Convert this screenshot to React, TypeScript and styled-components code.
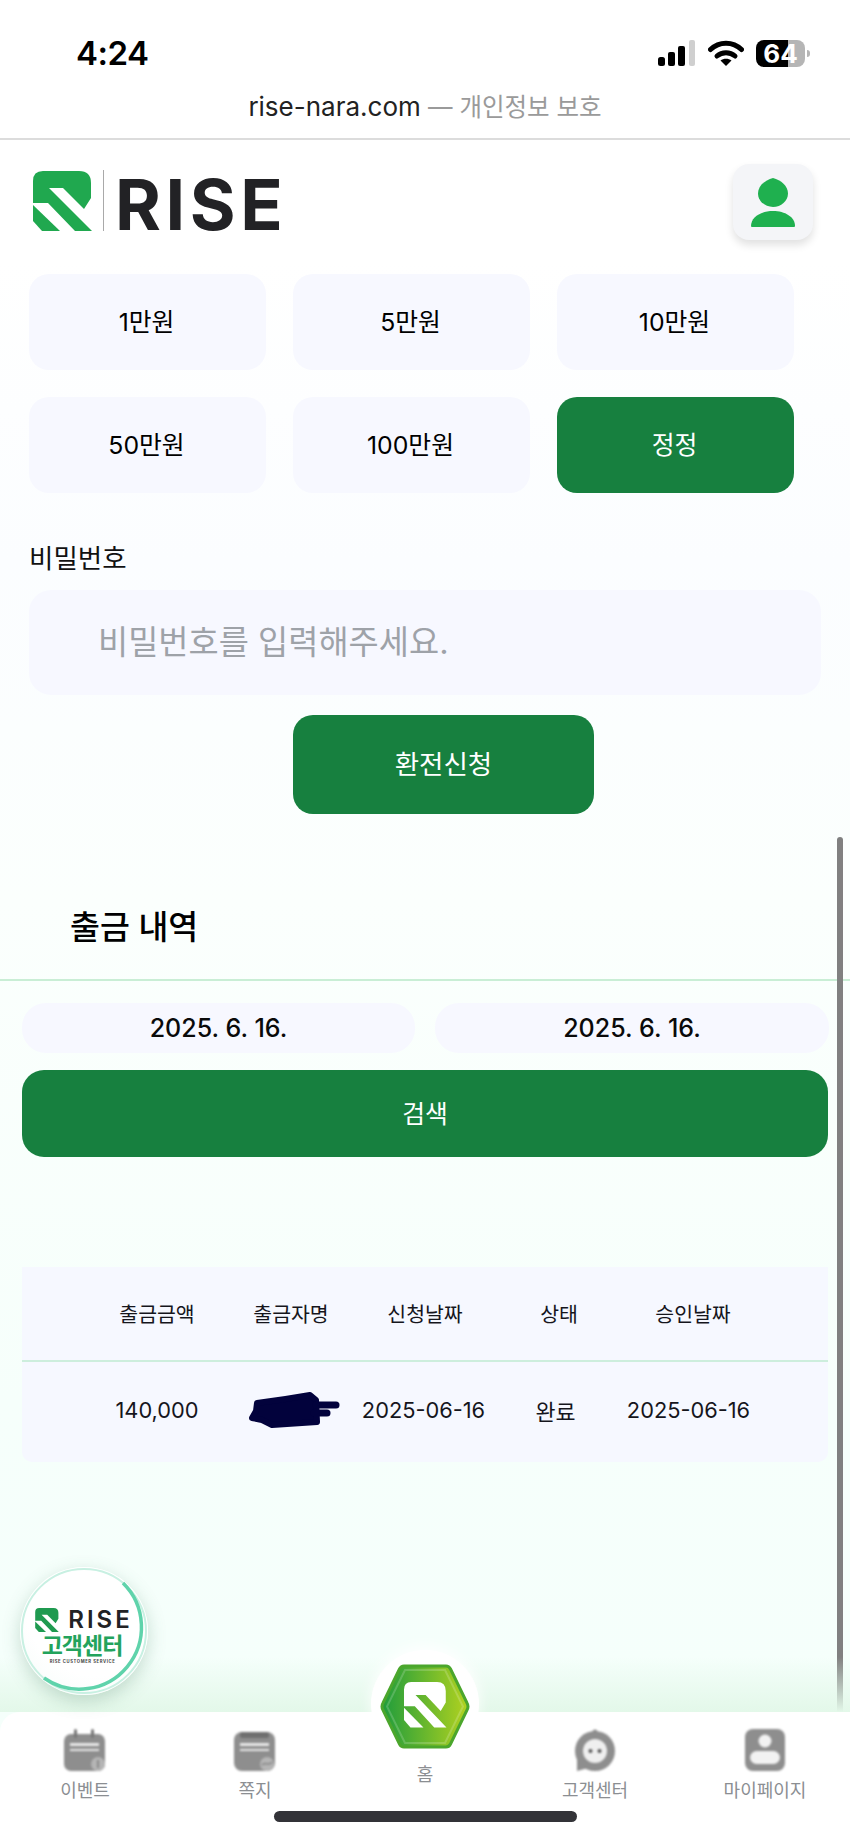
import React from "react";
import styled, { createGlobalStyle } from "styled-components";

const GlobalStyle = createGlobalStyle`
  html, body {
    margin: 0;
    padding: 0;
    background: #fff;
  }
  * {
    box-sizing: border-box;
  }
`;

const Page = styled.div`
  position: relative;
  width: 850px;
  height: 1839px;
  overflow: hidden;
  font-family: Inter, "Noto Sans CJK KR", sans-serif;
  color: #111;
  background: linear-gradient(180deg, #fff 0, #fff 260px, #fbfdff 560px, #fbfffd 900px, #f6fffb 1400px, #f5fffb 1700px);
`;

const StatusArea = styled.div`
  height: 140px;
  background: #fff;
  border-bottom: 2px solid #dcdcdc;
`;

const StatusRow = styled.div`
  display: flex;
  align-items: center;
  justify-content: space-between;
  height: 68px;
  padding: 38px 45px 0 76px;
`;

const Clock = styled.div`
  font-size: 33px;
  font-weight: 600;
  letter-spacing: -0.5px;
  color: #000;
`;

const StatusIcons = styled.div`
  display: flex;
  align-items: center;
  gap: 12px;
`;

const Battery = styled.div`
  position: relative;
  display: flex;
  align-items: center;
  justify-content: center;
  width: 49px;
  height: 27px;
  border-radius: 8px;
  background: linear-gradient(90deg, #000 66%, #b5b5b5 66%);
  color: #fff;
  font-size: 26px;
  font-weight: 700;
  &::after {
    content: "";
    position: absolute;
    left: 51px;
    top: 10px;
    width: 3px;
    height: 7px;
    border-radius: 0 3px 3px 0;
    background: #b5b5b5;
  }
`;

const UrlRow = styled.div`
  margin-top: 23px;
  text-align: center;
  font-size: 26px;
  line-height: 32px;
  color: #222;
`;

const UrlNote = styled.span`
  font-size: 24.5px;
  color: #9a9a9a;
`;

const Header = styled.header`
  display: flex;
  align-items: center;
  justify-content: space-between;
  height: 125px;
  padding: 0 37px 0 33px;
  background: #fff;
`;

const Logo = styled.div`
  display: flex;
  align-items: center;
  height: 60px;
  margin-top: -4px;
`;

const LogoRule = styled.div`
  width: 1px;
  height: 61px;
  margin: 0 11px 0 11px;
  background: #a9a9a9;
`;

const LogoWord = styled.div`
  margin-top: 8px;
  font-size: 70px;
  font-weight: 700;
  line-height: 60px;
  letter-spacing: 4.6px;
  color: #222225;
`;

const ProfileButton = styled.button`
  display: flex;
  align-items: center;
  justify-content: center;
  width: 80px;
  height: 76px;
  margin-top: -1px;
  padding: 0;
  border: 0;
  border-radius: 16px;
  background: #f4f5f8;
  box-shadow: 0 5px 8px rgba(0, 0, 0, 0.12);
`;

const Content = styled.main`
  padding: 9px 0 0;
`;

const AmountGrid = styled.div`
  display: grid;
  grid-template-columns: repeat(3, 237px);
  grid-auto-rows: 96px;
  gap: 27px;
  padding-left: 29px;
`;

const AmountButton = styled.button<{ $active?: boolean }>`
  padding: 0 2px 4px 0;
  border: 0;
  border-radius: 20px;
  font-family: inherit;
  font-size: 24.8px;
  font-weight: 400;
  background: ${(p) => (p.$active ? "#17803f" : "#f7f8ff")};
  color: ${(p) => (p.$active ? "#fff" : "#000")};
`;

const FieldLabel = styled.div`
  margin: 47px 0 14px 29px;
  font-size: 26.5px;
  line-height: 36px;
  color: #111;
`;

const PasswordInput = styled.input`
  display: block;
  width: 792px;
  height: 105px;
  margin-left: 29px;
  padding: 0 0 2px 69px;
  border: 0;
  border-radius: 22px;
  outline: none;
  background: #f7f8ff;
  font-family: inherit;
  font-size: 32.8px;
  &::placeholder {
    color: #9ea2a8;
    opacity: 1;
  }
`;

const SubmitButton = styled.button`
  display: block;
  width: 301px;
  height: 99px;
  margin: 20px 0 0 293px;
  padding: 0 0 4px;
  border: 0;
  border-radius: 20px;
  background: #17803f;
  color: #fff;
  font-family: inherit;
  font-size: 26.5px;
`;

const SectionTitle = styled.h2`
  margin: 0;
  padding: 91px 0 0 70px;
  height: 167px;
  border-bottom: 2px solid #c9eed5;
  font-size: 32.5px;
  font-weight: 500;
  line-height: 46px;
  color: #000;
`;

const DateRow = styled.div`
  display: grid;
  grid-template-columns: 393px 394px;
  gap: 20px;
  margin: 22px 0 0 22px;
`;

const DateBox = styled.div`
  display: flex;
  align-items: center;
  justify-content: center;
  height: 50px;
  border-radius: 24px;
  background: #f7f8ff;
  font-size: 25px;
  font-weight: 500;
  color: #0a0a0a;
`;

const SearchButton = styled.button`
  display: block;
  width: 806px;
  height: 87px;
  margin: 17px 0 0 22px;
  padding: 0 0 4px;
  border: 0;
  border-radius: 22px;
  background: #17803f;
  color: #fff;
  font-family: inherit;
  font-size: 24.8px;
`;

const HistoryTable = styled.div`
  width: 806px;
  margin: 110px 0 0 22px;
`;

const HeadRow = styled.div`
  display: grid;
  grid-template-columns: repeat(5, 134px);
  justify-content: center;
  align-items: center;
  height: 95px;
  padding-bottom: 2px;
  background: #f6f8ff;
  border-bottom: 2px solid #cdeedd;
  font-size: 20.5px;
  font-weight: 400;
  color: #15151c;
`;

const DataRow = styled.div`
  display: grid;
  grid-template-columns: 136px 133px 131px 133px 133px;
  align-items: center;
  height: 100px;
  padding: 0 0 4px 67px;
  background: #f6f8ff;
  border-radius: 0 0 10px 10px;
  font-size: 21.8px;
  font-weight: 400;
  color: #15151c;
`;

const Cell = styled.div`
  display: flex;
  justify-content: center;
  white-space: nowrap;
`;

const RedactionMark = styled.svg`
  margin-left: 5px;
`;

const Badge = styled.div`
  position: absolute;
  left: 20px;
  top: 1567px;
  display: flex;
  flex-direction: column;
  align-items: center;
  width: 128px;
  height: 128px;
  padding-top: 41px;
  border-radius: 50%;
  background: radial-gradient(circle at 60% 30%, #fff 60%, #f3fbf8 100%);
  box-shadow: 0 6px 18px rgba(60, 120, 90, 0.26);
`;

const BadgeRing = styled.svg`
  position: absolute;
  inset: 0;
`;

const BadgeLogo = styled.div`
  display: flex;
  align-items: center;
  gap: 9px;
  height: 24px;
`;

const BadgeWord = styled.div`
  font-size: 24px;
  font-weight: 600;
  line-height: 24px;
  letter-spacing: 3px;
  color: #222225;
`;

const BadgeTitle = styled.div`
  margin: 2px 4px 0 0;
  font-size: 23px;
  font-weight: 700;
  line-height: 25px;
  letter-spacing: -1px;
  color: #23a35c;
`;

const BadgeCaption = styled.div`
  margin-right: 3px;
  font-size: 4.2px;
  font-weight: 700;
  line-height: 6px;
  letter-spacing: 0.6px;
  color: #444;
`;

const BottomNav = styled.nav`
  position: absolute;
  left: 0;
  right: 0;
  bottom: 0;
  display: grid;
  grid-template-columns: repeat(5, 170px);
  height: 127px;
  border-radius: 20px 0 0 0;
  background: #fff;
  &::before {
    content: "";
    position: absolute;
    left: 0;
    right: 0;
    bottom: 100%;
    height: 55px;
    background: linear-gradient(180deg, rgba(226, 247, 232, 0), #e3f8e9);
  }
`;

const NavItem = styled.div<{ $home?: boolean }>`
  position: relative;
  display: flex;
  flex-direction: column;
  align-items: center;
  padding-top: ${(p) => (p.$home ? "45px" : "17px")};
`;

const NavIcon = styled.svg`
  display: block;
  width: 42px;
  height: 44px;
  filter: blur(1px);
`;

const NavLabel = styled.div`
  margin-top: 6px;
  font-size: 18px;
  font-weight: 400;
  line-height: 24px;
  color: #8b8e92;
`;

const HomeHalo = styled.div`
  position: absolute;
  left: 31px;
  top: -62px;
  width: 108px;
  height: 108px;
  border-radius: 50%;
  background: #fff;
  box-shadow: 0 -4px 14px rgba(255, 255, 255, 0.9);
`;

const HomeHex = styled.svg`
  position: absolute;
  left: 40px;
  top: -48px;
`;

const HomeIndicator = styled.div`
  position: absolute;
  left: 274px;
  top: 1811px;
  width: 303px;
  height: 11px;
  border-radius: 6px;
  background: #333338;
`;

const ScrollThumb = styled.div`
  position: absolute;
  left: 837px;
  top: 837px;
  width: 6px;
  height: 915px;
  border-radius: 3px;
  background: #808080;
`;

function RiseMark({ size, height, fill }: { size: number; height: number; fill: string }) {
  return (
    <svg width={size} height={height} viewBox="0 0 59 60">
      <path
        fill={fill}
        d="M0 10Q0 0 10 0H46Q58 0 58 12V27L51 38L30 17H16L59 60H42L15 32H0Z"
      />
      <path fill={fill} d="M0 34L27 60H9L0 50Z" />
    </svg>
  );
}

function SignalIcon() {
  return (
    <svg width="38" height="26" viewBox="0 0 38 26">
      <rect x="0" y="17" width="7" height="9" rx="2.5" fill="#000" />
      <rect x="10" y="12" width="7" height="14" rx="2" fill="#000" />
      <rect x="20" y="6" width="7" height="20" rx="2" fill="#000" />
      <rect x="31" y="0" width="6" height="26" rx="2" fill="#cfcfcf" />
    </svg>
  );
}

function WifiIcon() {
  return (
    <svg width="36" height="26" viewBox="0 0 36 26">
      <path d="M2.500 9.500C11 1 25 1 33.500 9.500" fill="none" stroke="#000" strokeWidth="5" strokeLinecap="round" />
      <path d="M9 16C14 11.500 22 11.500 27 16" fill="none" stroke="#000" strokeWidth="5" strokeLinecap="round" />
      <path d="M18 26L12.500 20.500C15.500 18 20.500 18 23.500 20.500Z" fill="#000" />
    </svg>
  );
}

function PersonIcon() {
  return (
    <svg width="44" height="49" viewBox="0 0 44 49">
      <path d="M22 0C30 2 37 8 37 15.500C37 23 30 29 22 29C14 29 7 23 7 15.500C7 8 14 2 22 0Z" fill="#1fb04f" />
      <path d="M0 48C0 39 10 33 22 33C34 33 44 39 44 48C44 49 43 49 42 49H2C1 49 0 49 0 48Z" fill="#1fb04f" />
    </svg>
  );
}

function Redaction() {
  return (
    <RedactionMark width="92" height="38" viewBox="0 0 92 38">
      <path
        fill="#02023c"
        stroke="#02023c"
        strokeWidth="6"
        strokeLinejoin="round"
        d="M9 12C25 10 45 7 62 4L68 9L69 31L24 34L14 29L4 27L8 20Z"
      />
      <path d="M68 14H88" stroke="#02023c" strokeWidth="7" strokeLinecap="round" />
      <path d="M66 22H79" stroke="#02023c" strokeWidth="7" strokeLinecap="round" />
    </RedactionMark>
  );
}

function BadgeArc() {
  return (
    <BadgeRing width="128" height="128" viewBox="0 0 128 128">
      <circle cx="64" cy="64" r="62" fill="none" stroke="#c8f0e2" strokeWidth="2" />
      <path d="M103 16A62 62 0 0 1 24 111" fill="none" stroke="#5fd3ab" strokeWidth="3.5" />
    </BadgeRing>
  );
}

function CalendarIcon() {
  return (
    <NavIcon viewBox="0 0 42 44">
      <rect x="0" y="5" width="41" height="37" rx="7" fill="#8e8e8e" />
      <rect x="10" y="0" width="3" height="9" rx="1.500" fill="#777" />
      <rect x="27" y="0" width="3" height="9" rx="1.500" fill="#777" />
      <rect x="6" y="14" width="29" height="3" fill="#e8e8e8" />
      <rect x="6" y="20" width="29" height="2" fill="#e8e8e8" />
      <circle cx="34" cy="35" r="7" fill="#b5b5b5" />
      <rect x="33" y="31" width="2" height="8" fill="#8a8a8a" />
    </NavIcon>
  );
}

function NoteIcon() {
  return (
    <NavIcon viewBox="0 0 42 44">
      <rect x="0" y="3" width="41" height="39" rx="8" fill="#8e8e8e" />
      <rect x="6" y="3" width="29" height="6" rx="2" fill="#6f6f6f" />
      <rect x="6" y="14" width="29" height="3" fill="#e8e8e8" />
      <rect x="6" y="20" width="29" height="2" fill="#e8e8e8" />
      <circle cx="33" cy="35" r="7" fill="#b5b5b5" />
      <path d="M28 36C31 32 35 38 38 33" stroke="#8a8a8a" strokeWidth="1.600" fill="none" />
    </NavIcon>
  );
}

function SupportIcon() {
  return (
    <NavIcon viewBox="0 0 42 44">
      <circle cx="21" cy="22" r="20" fill="#8e8e8e" />
      <circle cx="21" cy="3" r="2.500" fill="#8e8e8e" />
      <path d="M3 30L3 42L14 39Z" fill="#8e8e8e" />
      <circle cx="21" cy="22" r="12" fill="#efefef" />
      <circle cx="16.500" cy="22" r="2" fill="#555" />
      <circle cx="25.500" cy="22" r="2" fill="#555" />
    </NavIcon>
  );
}

function MyPageIcon() {
  return (
    <NavIcon viewBox="0 0 42 44">
      <rect x="1" y="0" width="40" height="42" rx="8" fill="#8e8e8e" />
      <circle cx="21" cy="12" r="6.500" fill="#f2f2f2" />
      <rect x="6" y="22" width="30" height="13" rx="6.500" fill="#f2f2f2" />
    </NavIcon>
  );
}

function HomeBadge() {
  return (
    <HomeHex width="90" height="85" viewBox="0 0 90 85">
      <defs>
        <linearGradient id="hexFill" x1="0" x2="1" y1="0" y2="0">
          <stop offset="0" stopColor="#1f9c3c" />
          <stop offset="1" stopColor="#b2d21f" />
        </linearGradient>
      </defs>
      <path
        d="M24 2H66Q69 2 70.500 5L87 39Q89 42.500 87 46L70.500 80Q69 83 66 83H24Q21 83 19.500 80L3 46Q1 42.500 3 39L19.500 5Q21 2 24 2Z"
        fill="url(#hexFill)"
        stroke="#4ba62c"
        strokeWidth="3"
      />
      <path
        d="M25 6H65L83 42.500L65 79H25L7 42.500Z"
        fill="none"
        stroke="#fff"
        strokeOpacity="0.18"
        strokeWidth="2"
      />
      <g transform="translate(24 18) scale(0.72 0.76)">
        <path fill="#fff" d="M0 10Q0 0 10 0H46Q58 0 58 12V27L51 38L30 17H16L59 60H42L15 32H0Z" />
        <path fill="#fff" d="M0 34L27 60H9L0 50Z" />
      </g>
    </HomeHex>
  );
}

export default function App() {
  return (
    <Page>
      <GlobalStyle />
      <StatusArea>
        <StatusRow>
          <Clock>4:24</Clock>
          <StatusIcons>
            <SignalIcon />
            <WifiIcon />
            <Battery>64</Battery>
          </StatusIcons>
        </StatusRow>
        <UrlRow>
          rise-nara.com <UrlNote>— 개인정보 보호</UrlNote>
        </UrlRow>
      </StatusArea>

      <Header>
        <Logo>
          <RiseMark size={59} height={60} fill="#20a84f" />
          <LogoRule />
          <LogoWord>RISE</LogoWord>
        </Logo>
        <ProfileButton aria-label="프로필">
          <PersonIcon />
        </ProfileButton>
      </Header>

      <Content>
        <AmountGrid>
          {["1만원", "5만원", "10만원", "50만원", "100만원"].map((label) => (
            <AmountButton key={label}>{label}</AmountButton>
          ))}
          <AmountButton $active>정정</AmountButton>
        </AmountGrid>

        <FieldLabel>비밀번호</FieldLabel>
        <PasswordInput readOnly placeholder="비밀번호를 입력해주세요." />
        <SubmitButton>환전신청</SubmitButton>

        <SectionTitle>출금 내역</SectionTitle>
        <DateRow>
          <DateBox>2025. 6. 16.</DateBox>
          <DateBox>2025. 6. 16.</DateBox>
        </DateRow>
        <SearchButton>검색</SearchButton>

        <HistoryTable>
          <HeadRow>
            <Cell>출금금액</Cell>
            <Cell>출금자명</Cell>
            <Cell>신청날짜</Cell>
            <Cell>상태</Cell>
            <Cell>승인날짜</Cell>
          </HeadRow>
          <DataRow>
            <Cell>140,000</Cell>
            <Cell>
              <Redaction />
            </Cell>
            <Cell>2025-06-16</Cell>
            <Cell>완료</Cell>
            <Cell>2025-06-16</Cell>
          </DataRow>
        </HistoryTable>
      </Content>

      <ScrollThumb />

      <BottomNav>
        <NavItem>
          <CalendarIcon />
          <NavLabel>이벤트</NavLabel>
        </NavItem>
        <NavItem>
          <NoteIcon />
          <NavLabel>쪽지</NavLabel>
        </NavItem>
        <NavItem $home>
          <HomeHalo />
          <HomeBadge />
          <NavLabel>홈</NavLabel>
        </NavItem>
        <NavItem>
          <SupportIcon />
          <NavLabel>고객센터</NavLabel>
        </NavItem>
        <NavItem>
          <MyPageIcon />
          <NavLabel>마이페이지</NavLabel>
        </NavItem>
      </BottomNav>

      <Badge>
        <BadgeArc />
        <BadgeLogo>
          <RiseMark size={24} height={24} fill="#1f9a50" />
          <BadgeWord>RISE</BadgeWord>
        </BadgeLogo>
        <BadgeTitle>고객센터</BadgeTitle>
        <BadgeCaption>RISE CUSTOMER SERVICE</BadgeCaption>
      </Badge>

      <HomeIndicator />
    </Page>
  );
}
